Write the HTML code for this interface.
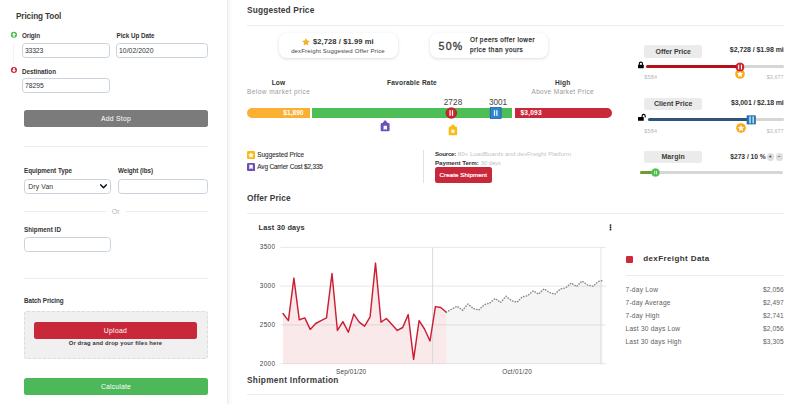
<!DOCTYPE html>
<html lang="en">
<head>
<meta charset="utf-8">
<title>Pricing Tool - dexFreight</title>
<style>
*{box-sizing:border-box;margin:0;padding:0}
html,body{width:800px;height:404px;overflow:hidden;background:#fff}
body{position:relative;font-family:"Liberation Sans",sans-serif;color:#333;-webkit-font-smoothing:antialiased}
.a{position:absolute;white-space:nowrap;line-height:1}
.b{font-weight:700}
.h1{font-size:8.300px;font-weight:700;color:#3a3a3a;letter-spacing:0}
.lbl{font-size:6.3px;font-weight:700;color:#333}
.inp{position:absolute;border:1px solid #c9d3de;border-radius:3.500px;background:#fff;height:15px;font-size:6.8px;color:#333;line-height:14.6px;padding-left:2px}
.hr{position:absolute;height:1px;background:#ececec}
.btn{position:absolute;border-radius:2.500px;color:#fff;text-align:center;font-size:6.8px}
.g{color:#9a9a9a}
.pill{position:absolute;padding-top:.5px;background:#ebebeb;border-radius:2px;text-align:center;font-size:7px;font-weight:700;color:#3a3a3a}
.val{font-size:7px;font-weight:700;color:#333}
.mm{margin-top:.5px;font-size:5.4px;color:#b5b5b5}
.row{font-size:6.6px;color:#5e5e5e;letter-spacing:.22px}
</style>
</head>
<body>

<!-- LEFT PANEL -->
<div class="a" style="left:227px;top:0;width:1.200px;height:404px;background:#ebebeb"></div>
<div class="a" style="left:228.200px;top:0;width:5px;height:404px;background:linear-gradient(90deg,rgba(0,0,0,.035),rgba(0,0,0,0))"></div>
<div class="a h1" style="letter-spacing:-0.12px;left:16px;top:12.600px;font-size:8.200px;">Pricing Tool</div>

<svg class="a" style="left:9px;top:30px" width="10" height="46" viewBox="0 0 10 46">
  <line x1="4.600" y1="12.500" x2="4.600" y2="34" stroke="#e3e3e3" stroke-width=".7" stroke-dasharray="1.200 .6"/>
  <circle cx="4.950" cy="4.750" r="3.050" fill="#45bb4c"/>
  <path d="M4.950 2.500 2.950 4.900H4.150V6.700H5.750V4.900H6.950Z" fill="#fff"/>
  <circle cx="4.950" cy="40" r="3.050" fill="#d3283b"/>
  <path d="M4.950 42.300 2.950 39.900H4.150V38.100H5.750V39.900H6.950Z" fill="#fff"/>
</svg>

<div class="a lbl" style="letter-spacing:-0.09px;left:22px;top:32.6px">Origin</div>
<div class="inp" style="letter-spacing:-0.16px;left:22px;top:43px;width:88px">33323</div>
<div class="a lbl" style="letter-spacing:-0.04px;left:116.500px;top:32.600px">Pick Up Date</div>
<div class="inp" style="letter-spacing:0.05px;left:116px;top:43px;width:92px">10/02/2020</div>
<div class="a lbl" style="letter-spacing:-0.03px;left:22px;top:68.7px">Destination</div>
<div class="inp" style="letter-spacing:-0.04px;left:22px;top:78.400px;width:88px">78295</div>

<div class="btn" style="letter-spacing:0.28px;left:24px;top:110px;width:184px;height:17px;background:#7b7b7b;line-height:17px">Add Stop</div>
<div class="hr" style="left:24px;top:146px;width:184px"></div>

<div class="a lbl" style="letter-spacing:-0.04px;left:24px;top:168px">Equipment Type</div>
<div class="inp" style="letter-spacing:0.14px;left:24px;top:178.600px;width:87px;padding-left:3.2px">Dry Van
  <svg class="a" style="right:2.600px;top:4px" width="7" height="5" viewBox="0 0 7 5"><path d="M.8.9 3.5 3.7 6.2.9" fill="none" stroke="#111" stroke-width="1.5" stroke-linecap="round" stroke-linejoin="round"/></svg>
</div>
<div class="a lbl" style="letter-spacing:-0.08px;left:118px;top:168px">Weight (lbs)</div>
<div class="inp" style="left:118px;top:178.600px;width:90px"></div>

<div class="hr" style="left:24px;top:211px;width:81.800px"></div>
<div class="hr" style="left:126px;top:211px;width:82px"></div>
<div class="a" style="letter-spacing:0.11px;left:111.800px;top:207.700px;font-size:7px;color:#b8b8b8">Or</div>

<div class="a lbl" style="letter-spacing:0.02px;left:24px;top:227px">Shipment ID</div>
<div class="inp" style="left:24px;top:237px;width:87px"></div>
<div class="hr" style="left:24px;top:277.500px;width:184px"></div>

<div class="a lbl" style="letter-spacing:-0.08px;left:24px;top:298.4px">Batch Pricing</div>
<div class="a" style="left:24px;top:311.400px;width:184px;height:47.400px;background:#f0f0f0;border:1px dashed #dcdcdc;border-radius:3px"></div>
<div class="btn" style="letter-spacing:0.32px;left:34px;top:321.8px;width:163px;height:17px;background:#c9283a;line-height:17px">Upload</div>
<div class="a lbl" style="letter-spacing:0.15px;left:34px;top:341.4px;width:163px;text-align:center;font-size:5.8px">Or drag and drop your files here</div>
<div class="btn" style="letter-spacing:0.18px;left:24px;top:378px;width:184px;height:17px;background:#4cb85a;line-height:17px">Calculate</div>

<!--RIGHT-->
<div class="a h1" style="letter-spacing:0.16px;left:247px;top:5.7px">Suggested Price</div>
<div class="hr" style="left:247px;top:24.500px;width:537px"></div>

<!-- cards -->
<div class="a" style="left:278.5px;top:32.5px;width:119px;height:25.5px;border-radius:8px;background:#fff;box-shadow:0 1px 3.500px rgba(0,0,0,.14)"></div>
<svg class="a" style="left:302.400px;top:37.700px" width="7.900" height="7.600" viewBox="0 0 24 23"><path d="M12 0l3.6 7.6 8.4 1.1-6.1 5.8 1.5 8.3L12 18.8 4.6 22.8l1.5-8.3L0 8.7l8.4-1.1z" fill="#f0b429"/></svg>
<div class="a b" style="letter-spacing:0.07px;left:313px;top:38px;font-size:7.6px;color:#333">$2,728 / $1.99 mi</div>
<div class="a" style="letter-spacing:0.15px;left:278.5px;width:119px;text-align:center;top:47.9px;font-size:6px;color:#444">dexFreight Suggested Offer Price</div>

<div class="a" style="left:429.5px;top:32.5px;width:118.5px;height:25.5px;border-radius:8px;background:#fff;box-shadow:0 1px 3.500px rgba(0,0,0,.14)"></div>
<div class="a" style="letter-spacing:1.26px;left:438.5px;top:40.700px;font-size:10.600px;color:#3d3d3d;-webkit-text-stroke:.3px #333">50%</div>
<div class="a" style="letter-spacing:0.45px;left:470px;top:37.3px;font-size:6.4px;color:#333;font-weight:400;-webkit-text-stroke:.25px #333">Of peers offer lower</div>
<div class="a" style="letter-spacing:0.49px;left:470px;top:47.1px;font-size:6.4px;color:#333;font-weight:400;-webkit-text-stroke:.25px #333">price than yours</div>

<!-- range labels -->
<div class="a lbl" style="letter-spacing:0.18px;left:247px;width:63px;text-align:center;top:80.0px;font-size:6.6px">Low</div>
<div class="a g" style="letter-spacing:0.44px;left:247px;top:88.8px;font-size:6.5px">Below market price</div>
<div class="a lbl" style="letter-spacing:0.19px;left:312px;width:200px;text-align:center;top:80.0px;font-size:6.6px">Favorable Rate</div>
<div class="a lbl" style="letter-spacing:0.21px;left:514.200px;width:97px;text-align:center;top:80.0px;font-size:6.6px">High</div>
<div class="a g" style="letter-spacing:0.32px;left:495px;width:99px;text-align:right;top:88.8px;font-size:6.5px">Above Market Price</div>

<div class="a" style="letter-spacing:0.13px;left:433px;width:40px;text-align:center;top:99.4px;font-size:8.2px;color:#444">2728</div>
<div class="a" style="letter-spacing:-0.05px;left:478px;width:40px;text-align:center;top:99.4px;font-size:8.2px;color:#444">3001</div>

<!-- bar -->
<div class="a" style="left:247px;top:108.300px;width:63px;height:9.800px;background:#fbb034;border-radius:5px 0 0 5px"></div>
<div class="a" style="left:312px;top:108.300px;width:200px;height:9.800px;background:#4cbe55"></div>
<div class="a" style="left:514.5px;top:108.300px;width:97.500px;height:9.800px;background:#c9283a;border-radius:0 5px 5px 0"></div>
<div class="a b" style="letter-spacing:0.01px;left:247px;width:56.5px;text-align:right;top:110.0px;font-size:6.6px;color:#fff">$1,890</div>
<div class="a b" style="letter-spacing:0.18px;left:520.5px;top:110.0px;font-size:6.6px;color:#fff">$3,093</div>

<!-- handles -->
<svg class="a" style="left:444px;top:106.150px" width="15" height="15" viewBox="0 0 15 15"><circle cx="7.3" cy="7" r="5.300" fill="#cf2233" stroke="#b3101a" stroke-width=".7"/><rect x="5.500" y="4.200" width="1.200" height="5.600" fill="#fff"/><rect x="7.900" y="4.200" width="1.200" height="5.600" fill="#fff"/></svg>
<svg class="a" style="left:489px;top:106.200px" width="14" height="14" viewBox="0 0 14 14"><rect x="1.3" y="1.5" width="10.8" height="11" fill="#2c86d1" stroke="#1e62a3" stroke-width=".8"/><rect x="4.900" y="4.200" width="1.200" height="5.600" fill="#fff"/><rect x="7.300" y="4.200" width="1.200" height="5.600" fill="#fff"/></svg>

<!-- tag markers -->
<svg class="a" style="left:380.100px;top:119.600px" width="11" height="12" viewBox="0 0 11 12"><rect x=".7" y="2.900" width="8.900" height="8.450" rx="1.100" fill="#6a50b8"/><path d="M2.300 3.400 4.500.5H5.800L8 3.400Z" fill="#6a50b8"/><path d="M3.600 5.700H6.900V10.100L5.250 9 3.600 10.100Z" fill="#fff"/></svg>
<svg class="a" style="left:447.500px;top:123.600px" width="11" height="12" viewBox="0 0 11 12"><rect x=".7" y="2.800" width="8.400" height="8.450" rx="1.100" fill="#fdb913"/><path d="M2.100 3.300 4.250.5H5.550L7.700 3.300Z" fill="#fdb913"/><path d="M4.900 4.700l.75 1.550 1.700.25-1.230 1.200.3 1.700-1.520-.8-1.520.8.300-1.700-1.230-1.200 1.700-.25z" fill="#fff"/></svg>

<!-- legend -->
<svg class="a" style="left:247px;top:150.550px" width="8.100" height="8.100" viewBox="0 0 8 8"><rect width="8" height="8" rx="1.300" fill="#fdb913"/><path d="M4 1.200l.9 1.850 2 .25-1.450 1.400.35 2L4 5.750l-1.800.95.350-2L1.100 3.300l2-.25z" fill="#fff"/></svg>
<div class="a" style="letter-spacing:-0.01px;left:257.300px;top:151.600px;font-size:6.400px;color:#333;font-weight:400;-webkit-text-stroke:.12px #333">Suggested Price</div>
<svg class="a" style="left:247px;top:162.500px" width="8.100" height="8.100" viewBox="0 0 8 8"><rect width="8" height="8" rx="1.300" fill="#6a50b8"/><path d="M2.300 1.700H5.700V6.300L4 5.100 2.300 6.300Z" fill="#fff"/></svg>
<div class="a" style="letter-spacing:-0.13px;left:257.300px;top:163.700px;font-size:6.400px;color:#333;font-weight:400;-webkit-text-stroke:.12px #333">Avg Carrier Cost $2,335</div>

<div class="a" style="left:423.3px;top:150px;width:1px;height:33px;background:#e2e2e2"></div>
<div class="a" style="left:435px;top:151.100px;font-size:6.2px;color:#c4c4c4"><span class="b" style="letter-spacing:-0.29px;color:#333">Source:</span> 80+ LoadBoards and dexFreight Platform</div>
<div class="a" style="left:435px;top:159.700px;font-size:6.2px;color:#c4c4c4"><span class="b" style="letter-spacing:-0.04px;color:#333">Payment Term:</span> <span style="letter-spacing:-.2px">30 days</span></div>
<div class="btn" style="letter-spacing:0.07px;left:435px;top:167px;width:56.5px;height:16px;background:#c9283a;line-height:16px;font-size:6.2px;font-weight:400;-webkit-text-stroke:.2px #fff">Create Shipment</div>

<div class="a h1" style="letter-spacing:0.12px;left:247px;top:194.3px">Offer Price</div>
<div class="hr" style="left:247px;top:213px;width:537px"></div>
<!--CHART-->
<div class="a b" style="letter-spacing:0.16px;left:258.600px;top:223.900px;font-size:7.400px;color:#333">Last 30 days</div>
<svg class="a" style="left:608.600px;top:224.100px" width="3" height="7" viewBox="0 0 3 7"><circle cx="1.500" cy="1.100" r=".95" fill="#222"/><circle cx="1.500" cy="3.300" r=".95" fill="#222"/><circle cx="1.500" cy="5.500" r=".95" fill="#222"/></svg>
<!--CHARTSVG-->
<svg class="a" style="left:0;top:0" width="800" height="404" viewBox="0 0 800 404">
  <g stroke="#e4e4e4" stroke-width=".9" fill="none">
    <path d="M280.500 247.4H606M280.500 286.15H606M280.500 324.9H606M280.500 363.65H606"/>
    <path d="M600.900 247.4V363.65"/>
  </g>
  <polygon points="283.0,313.5 288.4,320.6 293.9,278.1 299.3,319.8 304.8,317.9 310.2,329.4 315.7,323.5 321.1,320.6 326.5,317.9 332.0,273.5 337.4,330.4 342.9,321.6 348.3,332.2 353.8,314.1 359.2,322.2 364.6,326.2 370.1,316.8 375.5,263.1 381.0,322.2 386.4,318.5 391.9,324.4 397.3,330.4 402.7,327.5 408.2,314.6 413.6,359.4 419.1,320.6 424.5,329.0 430.0,341.0 435.4,306.6 440.8,307.5 446.3,312.2 446.3,363.65 283.0,363.65" fill="#d0273a" fill-opacity=".1"/>
  <polygon points="446.3,312.2 451.7,309.2 457.1,306.2 462.6,310.2 468.0,304.0 473.4,308.5 478.9,310.0 484.3,304.6 489.7,303.1 495.2,298.5 500.6,302.5 506.0,296.2 511.4,300.6 516.9,302.2 522.3,296.9 527.7,295.6 533.2,290.9 538.6,294.1 544.0,288.8 549.5,292.5 554.9,294.1 560.3,289.0 565.8,287.8 571.2,283.1 576.6,286.5 582.0,281.0 587.5,285.0 592.9,286.2 598.3,281.5 602.4,280.6 602.4,363.65 446.3,363.65" fill="#8c8c8c" fill-opacity=".085"/>
  <path d="M432.600 247.4V363.65" stroke="#d6d6d6" stroke-width=".9"/>
  <polyline points="283.0,313.5 288.4,320.6 293.9,278.1 299.3,319.8 304.8,317.9 310.2,329.4 315.7,323.5 321.1,320.6 326.5,317.9 332.0,273.5 337.4,330.4 342.9,321.6 348.3,332.2 353.8,314.1 359.2,322.2 364.6,326.2 370.1,316.8 375.5,263.1 381.0,322.2 386.4,318.5 391.9,324.4 397.3,330.4 402.7,327.5 408.2,314.6 413.6,359.4 419.1,320.6 424.5,329.0 430.0,341.0 435.4,306.6 440.8,307.5 446.3,312.2" fill="none" stroke="#cb1f34" stroke-width="1.450" stroke-linejoin="round" stroke-linecap="round"/>
  <polyline points="446.3,312.2 451.7,309.2 457.1,306.2 462.6,310.2 468.0,304.0 473.4,308.5 478.9,310.0 484.3,304.6 489.7,303.1 495.2,298.5 500.6,302.5 506.0,296.2 511.4,300.6 516.9,302.2 522.3,296.9 527.7,295.6 533.2,290.9 538.6,294.1 544.0,288.8 549.5,292.5 554.9,294.1 560.3,289.0 565.8,287.8 571.2,283.1 576.6,286.5 582.0,281.0 587.5,285.0 592.9,286.2 598.3,281.5 602.4,280.6" fill="none" stroke="#8a8a8a" stroke-width="1.500" stroke-linecap="round" stroke-dasharray=".3 2.400"/>
  <g font-family="Liberation Sans, sans-serif" font-size="6.4" fill="#444" style="letter-spacing:.32px">
    <text x="275.300" y="249.2" text-anchor="end" style="letter-spacing:0.32px;">3500</text>
    <text x="275.300" y="288.2" text-anchor="end">3000</text>
    <text x="275.300" y="327.0" text-anchor="end">2500</text>
    <text x="275.300" y="365.8" text-anchor="end">2000</text>
    <text x="351.200" y="374.100" text-anchor="middle" style="letter-spacing:0.12px;">Sep/01/20</text>
    <text x="517.200" y="374.100" text-anchor="middle" style="letter-spacing:0.25px;">Oct/01/20</text>
  </g>
</svg>
<!--/CHARTSVG-->
<div class="a h1" style="letter-spacing:0.30px;left:247px;top:376.3px">Shipment Information</div>
<div class="hr" style="left:247px;top:394.200px;width:537px"></div>

<!-- data -->
<div class="a" style="left:625.500px;top:255.500px;width:7.600px;height:7.600px;border-radius:1.200px;background:#d0273a"></div>
<div class="a b" style="letter-spacing:0.40px;left:643.200px;top:254.700px;font-size:8px;color:#333">dexFreight Data</div>
<div class="hr" style="left:625.500px;top:274.700px;width:158.500px"></div>
<div class="a row" style="letter-spacing:0.25px;left:625.500px;top:286.9px">7-day Low</div><div class="a row" style="letter-spacing:0.09px;left:700px;width:83.700px;text-align:right;top:286.9px">$2,056</div>
<div class="a row" style="letter-spacing:0.21px;left:625.500px;top:299.8px">7-day Average</div><div class="a row" style="letter-spacing:.09px;left:700px;width:83.700px;text-align:right;top:299.8px">$2,497</div>
<div class="a row" style="left:625.500px;top:312.8px">7-day High</div><div class="a row" style="letter-spacing:.09px;left:700px;width:83.700px;text-align:right;top:312.8px">$2,741</div>
<div class="a row" style="left:625.500px;top:325.8px">Last 30 days Low</div><div class="a row" style="letter-spacing:0.09px;left:700px;width:83.700px;text-align:right;top:325.8px">$2,056</div>
<div class="a row" style="letter-spacing:0.19px;left:625.500px;top:338.7px">Last 30 days High</div><div class="a row" style="letter-spacing:.09px;left:700px;width:83.700px;text-align:right;top:338.7px">$3,305</div>

<!-- sliders -->
<div class="pill" style="letter-spacing:-0.04px;left:644.300px;top:45.200px;width:57.800px;height:12.400px;line-height:12.400px">Offer Price</div>
<div class="a val" style="letter-spacing:-0.06px;left:700px;width:83.700px;text-align:right;top:46.300px">$2,728 / $1.98 mi</div>
<svg class="a" style="left:636.500px;top:61px" width="8" height="8" viewBox="0 0 8 8"><path d="M2.300 4V2.700a1.600 1.600 0 0 1 3.200 0V4" fill="none" stroke="#000" stroke-width="1.100"/><rect x="1" y="3.700" width="5.800" height="3.500" rx=".6" fill="#000"/></svg>
<div class="a" style="left:646.400px;top:65.050px;width:137.200px;height:3px;border-radius:1.500px;background:#d6d6d6"></div>
<div class="a" style="left:735.100px;top:61.500px;width:9.800px;height:9.800px;border-radius:50%;background:#fff"></div>
<div class="a" style="left:646.400px;top:65.050px;width:94px;height:3px;border-radius:1.500px;background:#b3101a"></div>
<svg class="a" style="left:734.700px;top:69.400px" width="10" height="10" viewBox="0 0 10 10"><circle cx="5" cy="5" r="4.850" fill="#fbab18"/><path d="M5 1.900l1 2 2.150.35-1.550 1.550.4 2.200-2-1.050-2 1.050.4-2.200L1.850 4.250 4 3.900z" fill="#fff"/></svg>
<svg class="a" style="left:734px;top:60.500px" width="12" height="12" viewBox="0 0 12 12"><circle cx="6" cy="6" r="4.050" fill="#cf2233" stroke="#b3101a" stroke-width=".6"/><rect x="4.150" y="3.700" width="1.050" height="4.700" fill="#fff"/><rect x="6.950" y="3.700" width="1.050" height="4.700" fill="#fff"/></svg>
<div class="a mm" style="letter-spacing:0.20px;left:644.300px;top:74.800px">$584</div>
<div class="a mm" style="letter-spacing:0.07px;left:700px;width:83.700px;text-align:right;top:74.800px">$3,677</div>

<div class="pill" style="letter-spacing:0.01px;left:644.300px;top:97.800px;width:57.800px;height:12.400px;line-height:12.400px">Client Price</div>
<div class="a val" style="letter-spacing:-0.13px;left:700px;width:83.700px;text-align:right;top:99px">$3,001 / $2.18 mi</div>
<svg class="a" style="left:636.500px;top:113px" width="10" height="9" viewBox="0 0 10 9"><path d="M5.100 4.500V2.900a1.550 1.550 0 0 1 3.100 0V4.600" fill="none" stroke="#000" stroke-width="1.100"/><rect x="1" y="4.100" width="5.800" height="3.700" rx=".6" fill="#000"/></svg>
<div class="a" style="left:647.800px;top:117.700px;width:135.800px;height:3.700px;border-radius:1.850px;background:#d6d6d6"></div>
<div class="a" style="left:745.900px;top:115px;width:10.600px;height:10.400px;background:#fff"></div>
<div class="a" style="left:647.800px;top:117.700px;width:100px;height:3.700px;border-radius:1.850px;background:#2f5478"></div>
<svg class="a" style="left:735.800px;top:122.500px" width="10" height="10" viewBox="0 0 10 10"><circle cx="5" cy="5" r="4.850" fill="#fbab18"/><path d="M5 1.900l1 2 2.150.35-1.550 1.550.4 2.200-2-1.050-2 1.050.4-2.200L1.850 4.250 4 3.900z" fill="#fff"/></svg>
<svg class="a" style="left:745px;top:114.300px" width="12" height="12" viewBox="0 0 12 12"><rect x="2.050" y="1.800" width="8.300" height="8.200" fill="#1f7fc4" stroke="#2a5a8a" stroke-width=".7"/><rect x="4.500" y="2.400" width="1.100" height="7" fill="#fff"/><rect x="7.600" y="2.400" width="1.100" height="7" fill="#fff"/></svg>
<div class="a mm" style="letter-spacing:0.20px;left:644.300px;top:128.300px">$584</div>
<div class="a mm" style="letter-spacing:0.07px;left:700px;width:83.700px;text-align:right;top:128.300px">$3,677</div>

<div class="pill" style="letter-spacing:0.11px;left:644.300px;top:151.100px;width:57.800px;height:11.800px;line-height:10.300px">Margin</div>
<div class="a val" style="letter-spacing:-0.03px;left:730.300px;top:153.600px;font-size:6.700px">$273 / 10 %</div>
<div class="a" style="left:766.500px;top:153px;width:7.600px;height:7.600px;border-radius:50%;background:#dedede;font-size:5px;font-weight:700;color:#222;text-align:center;line-height:7.400px">+</div>
<div class="a" style="left:775.500px;top:153px;width:7.600px;height:7.600px;border-radius:50%;background:#dedede;font-size:5px;font-weight:700;color:#555;text-align:center;line-height:7px">&#8722;</div>
<div class="a" style="left:640.400px;top:170.700px;width:143.100px;height:3px;border-radius:1.500px;background:#d6d6d6"></div>
<div class="a" style="left:640.400px;top:170.700px;width:15px;height:3px;border-radius:1.500px;background:#6f9c2d"></div>
<svg class="a" style="left:650px;top:166.700px" width="11" height="11" viewBox="0 0 11 11"><circle cx="5.500" cy="5.600" r="4" fill="#4dbd4d" stroke="#6fd06a" stroke-width=".5"/><rect x="4.300" y="3.800" width=".9" height="3.600" fill="#d9f3d6"/><rect x="6" y="3.800" width=".9" height="3.600" fill="#d9f3d6"/></svg>

</body>
</html>
